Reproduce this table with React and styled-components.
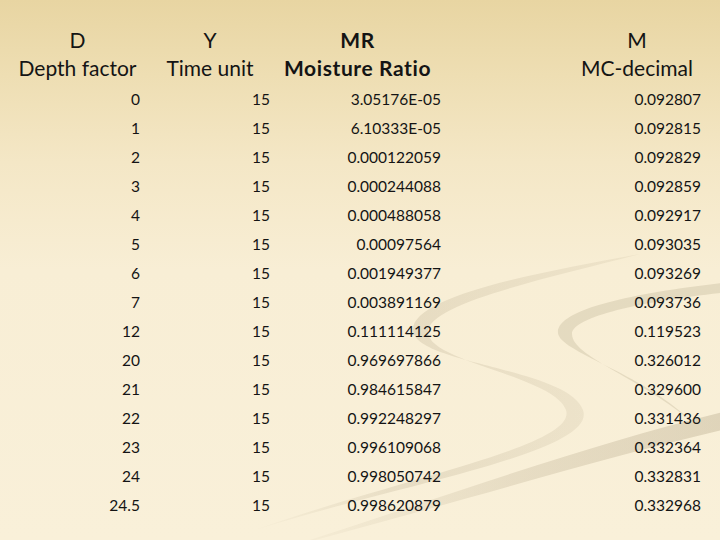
import React from "react";
import styled, { createGlobalStyle } from "styled-components";

const Global = createGlobalStyle`
  html, body { margin: 0; padding: 0; }
  body { width: 720px; height: 540px; overflow: hidden; }
`;

const Slide = styled.div`
  position: relative;
  width: 720px;
  height: 540px;
  overflow: hidden;
  background: linear-gradient(180deg, #e8d5a2 0%, #eedeb3 14%, #f4e7c6 30%, #f8eed5 50%, #f9f0d9 100%);
  font-family: Lato, "Liberation Sans", sans-serif;
  color: #141414;
`;

const Decor = styled.svg`
  position: absolute;
  inset: 0;
  width: 720px;
  height: 540px;
  pointer-events: none;
`;

const Table = styled.div`
  position: relative;
  display: grid;
  grid-template-columns: 135px 130px 171px 122px 138px;
  margin-left: 10px;
  padding-top: 26px;
`;

const HeadCell = styled.div`
  font-size: 21px;
  line-height: 28px;
  text-align: center;
  font-weight: ${(p) => (p.$bold ? 700 : 400)};
  letter-spacing: ${(p) => (p.$bold ? "0.6px" : "0")};
  padding-right: ${(p) => p.$shift || 0}px;
  padding-bottom: 3px;
  white-space: nowrap;
`;

const Cell = styled.div`
  font-size: 15.5px;
  line-height: 29px;
  height: 29px;
  text-align: right;
  padding-right: 5px;
  white-space: nowrap;
`;

const rows = [
  ["0", "15", "3.05176E-05", "0.092807"],
  ["1", "15", "6.10333E-05", "0.092815"],
  ["2", "15", "0.000122059", "0.092829"],
  ["3", "15", "0.000244088", "0.092859"],
  ["4", "15", "0.000488058", "0.092917"],
  ["5", "15", "0.00097564", "0.093035"],
  ["6", "15", "0.001949377", "0.093269"],
  ["7", "15", "0.003891169", "0.093736"],
  ["12", "15", "0.111114125", "0.119523"],
  ["20", "15", "0.969697866", "0.326012"],
  ["21", "15", "0.984615847", "0.329600"],
  ["22", "15", "0.992248297", "0.331436"],
  ["23", "15", "0.996109068", "0.332364"],
  ["24", "15", "0.998050742", "0.332831"],
  ["24.5", "15", "0.998620879", "0.332968"],
];

function Swooshes() {
  return (
    <Decor viewBox="0 0 720 540">
      <defs>
        <linearGradient id="fadeA" x1="0" y1="0" x2="1" y2="0">
          <stop offset="0" stopColor="#a8997a" stopOpacity="0.03" />
          <stop offset="0.4" stopColor="#a8997a" stopOpacity="0.22" />
          <stop offset="1" stopColor="#a8997a" stopOpacity="0.12" />
        </linearGradient>
        <linearGradient id="fadeB" x1="0" y1="0" x2="1" y2="0">
          <stop offset="0" stopColor="#a8997a" stopOpacity="0.03" />
          <stop offset="0.5" stopColor="#a8997a" stopOpacity="0.22" />
          <stop offset="1" stopColor="#a8997a" stopOpacity="0.32" />
        </linearGradient>
      </defs>
      <path
        d="M 640 254 C 540 272, 412 296, 413 330 C 414 364, 568 368, 583 410 C 598 452, 400 484, 255 530 C 400 478, 578 446, 566 410 C 554 376, 428 362, 428 332 C 428 304, 540 280, 640 254 Z"
        fill="url(#fadeA)"
      />
      <path
        d="M 730 282 C 640 292, 556 308, 558 333 C 560 352, 640 372, 690 420 C 636 376, 572 356, 572 334 C 572 316, 650 300, 730 292 Z"
        fill="#a8997a"
        fillOpacity="0.24"
      />
      <path
        d="M 740 408 C 600 440, 450 495, 285 548 C 450 505, 610 455, 740 426 Z"
        fill="url(#fadeB)"
      />
    </Decor>
  );
}

export default function App() {
  return (
    <Slide>
      <Global />
      <Swooshes />
      <Table>
        <HeadCell>D<br />Depth factor</HeadCell>
        <HeadCell>Y<br />Time unit</HeadCell>
        <HeadCell $bold $shift={6}>MR<br />Moisture Ratio</HeadCell>
        <HeadCell />
        <HeadCell>M<br />MC-decimal</HeadCell>
        {rows.map((r, i) => (
          <React.Fragment key={i}>
            <Cell>{r[0]}</Cell>
            <Cell>{r[1]}</Cell>
            <Cell>{r[2]}</Cell>
            <Cell />
            <Cell>{r[3]}</Cell>
          </React.Fragment>
        ))}
      </Table>
    </Slide>
  );
}
